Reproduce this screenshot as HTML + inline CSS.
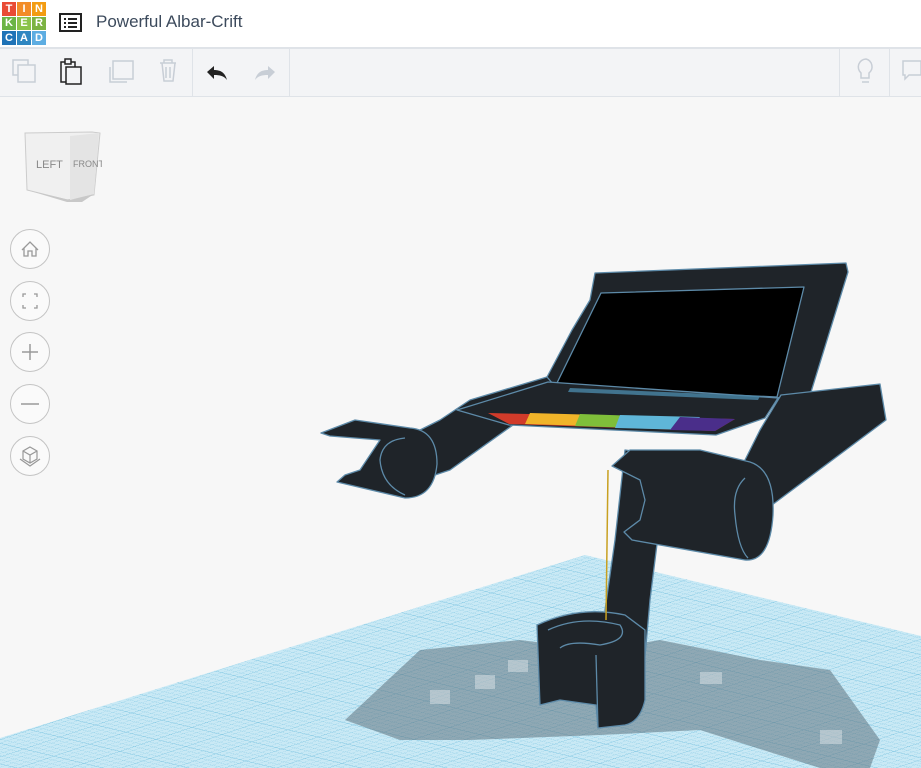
<!DOCTYPE html>
<html><head><meta charset="utf-8"><style>
body{margin:0;width:921px;height:768px;overflow:hidden;background:#f7f7f7;font-family:"Liberation Sans",sans-serif;position:relative}
.top{position:absolute;left:0;top:0;width:921px;height:47px;background:#fff;border-bottom:2px solid #dfe3e8}
.logo{position:absolute;left:2px;top:2px;width:43px;height:43px;display:grid;grid-template-columns:repeat(3,14px);gap:1px}
.logo span{color:#fff;font-weight:bold;font-size:11px;display:flex;align-items:center;justify-content:center}
.title{position:absolute;left:96px;top:12px;font-size:17px;color:#3c4a5c}
.tb{position:absolute;left:0;top:49px;width:921px;height:47px;background:#f3f4f6;border-bottom:1px solid #dfe3e8}
.sep{position:absolute;top:0;width:1px;height:47px;background:#dfe3e8}
.nav{position:absolute;left:10px;width:40px;height:40px;border:1px solid #c4c4c4;border-radius:50%;box-sizing:border-box;background:#fafafa}
</style></head><body>
<svg width="921" height="768" style="position:absolute;left:0;top:0">
<defs>
<pattern id="g" width="6" height="6" patternUnits="userSpaceOnUse" patternTransform="matrix(1 0.24 -1.2 0.4 0 0)"><rect width="6" height="6" fill="#c9e9f5"/><path d="M0 0H6M0 0V6" stroke="#8ccde6" stroke-width="0.8"/></pattern>
<pattern id="g2" width="30" height="30" patternUnits="userSpaceOnUse" patternTransform="matrix(1 0.24 -1.2 0.4 0 0)"><path d="M0 0H30M0 0V30" stroke="#5fb5d8" stroke-width="1.2" fill="none"/></pattern>
<clipPath id="cp"><polygon points="585,555 921,636 921,768 0,768 0,738"/></clipPath>
</defs>
<polygon points="585,555 921,636 921,768 0,768 0,738" fill="url(#g)"/>
<polygon points="585,555 921,636 921,768 0,768 0,738" fill="url(#g2)" opacity=".6"/>
<g clip-path="url(#cp)" fill="#5e727e" opacity="0.55">
<polygon points="345,720 420,650 520,640 600,650 660,640 760,660 830,670 880,740 870,768 820,768 700,730 600,735 470,740 400,740"/>
</g>
<g fill="#fff" opacity="0.35" clip-path="url(#cp)"><rect x="430" y="690" width="20" height="14"/><rect x="475" y="675" width="20" height="14"/><rect x="508" y="660" width="20" height="12"/><rect x="700" y="672" width="22" height="12"/><rect x="820" y="730" width="22" height="14"/></g>
<g fill="#1f2429" stroke="#5d8aa8" stroke-width="1.3" stroke-linejoin="round">
<!-- screen frame -->
<polygon points="595,273 846,263 848,272 811,392 777,398 555,387 547,377 572,330 590,300"/>
<polygon points="601,293 804,287 777,397 555,387" fill="#000"/>
<!-- right arm -->
<polygon points="781,395 880,384 886,420 772,505 730,490 760,430"/>
<!-- left arm -->
<polygon points="547,377 560,392 520,420 450,470 420,480 395,470 400,440 440,420 470,400"/>
<!-- stem -->
<polygon points="625,450 665,455 660,520 650,600 642,690 605,700 605,610 615,540"/>
<!-- plate -->
<polygon points="457,410 548,382 778,398 765,418 716,435 509,425"/>
<!-- left clip -->
<path d="M321,433 L355,420 L410,428 Q437,430 437,464 Q434,498 405,498 L337,482 L345,475 L360,470 L380,440 L330,436 Z"/>
<path d="M405,438 Q382,440 380,460 Q382,485 405,495" fill="none"/>
<!-- right clip -->
<path d="M612,466 L630,450 L700,450 L750,462 Q775,470 773,515 Q770,562 745,560 L632,540 L624,532 L640,520 L645,500 L640,480 L620,470 Z"/>
<path d="M745,478 Q732,490 735,515 Q738,548 748,558" fill="none"/>
<!-- cup -->
<path d="M537,625 Q580,605 625,615 L645,630 L645,700 Q640,722 625,725 L598,728 L596,705 L560,700 L540,705 Z"/>
<path d="M548,630 Q580,615 620,625 Q630,640 600,645 Q570,640 560,648" fill="#1f2429"/>
<path d="M596,655 L598,728" fill="none"/>
</g>
<polygon points="488,413 735,419 715,431 509,424" fill="#d13b2a"/>
<polygon points="530,413 600,415 590,426 525,424" fill="#f0b429"/>
<polygon points="580,414 640,416 635,428 575,426" fill="#7fbf3a"/>
<polygon points="620,415 700,417 690,430 615,428" fill="#5fb6d8"/>
<polygon points="680,417 735,419 715,431 670,430" fill="#4a2e8a"/>
<polygon points="570,388 760,396 758,400 568,392" fill="#4a87a8" opacity=".8"/>
<path d="M608 470 L606 620" stroke="#c8a020" stroke-width="1.5"/>
</svg>
<div class="top">
<div class="logo">
<span style="background:#e94b35">T</span><span style="background:#f28c28">I</span><span style="background:#f39c12">N</span>
<span style="background:#6bb445">K</span><span style="background:#8bc34a">E</span><span style="background:#7cb342">R</span>
<span style="background:#1f73b7">C</span><span style="background:#2e86c1">A</span><span style="background:#5dade2">D</span></div>
<svg style="position:absolute;left:59px;top:13px" width="23" height="19"><rect x="1" y="1" width="21" height="17" fill="none" stroke="#222" stroke-width="2"/><path d="M5 6h2M9 6h9M5 10h2M9 10h9M5 14h2M9 14h9" stroke="#222" stroke-width="2"/></svg>
<div class="title">Powerful Albar-Crift</div></div>
<div class="tb">
<svg width="921" height="47">
<g fill="none" stroke="#c8ced6" stroke-width="1.5"><rect x="13" y="11" width="15" height="15"/><rect x="18" y="16" width="17" height="17" fill="#f3f4f6"/>
<rect x="113" y="12" width="20" height="18"/><path d="M110 18v15h17"/><path d="M160 14h16M164 14v-3h8v3M162 14l2 18h9l2-18M166 18v11M170 18v11"/>
<path d="M866 10a8 8 0 0 0-5 14v5h8v-5a8 8 0 0 0-3-14zM862 33h7"/><path d="M903 12h18v14h-12l-4 4v-4h-2z"/></g>
<g fill="none" stroke="#222" stroke-width="1.5"><rect x="61" y="13" width="14" height="20"/><rect x="66" y="18" width="15" height="17" fill="#f3f4f6"/><rect x="65" y="10" width="6" height="5" fill="#f3f4f6"/></g>
<path d="M207 23l7-6v4c6 0 11 2 13 10-3-4-7-5-13-5v4z" fill="#222"/>
<path d="M275 23l-7-6v4c-6 0-11 2-13 10 3-4 7-5 13-5v4z" fill="#c8ced6"/>
</svg>
<div class="sep" style="left:192px"></div><div class="sep" style="left:289px"></div><div class="sep" style="left:839px"></div><div class="sep" style="left:889px"></div></div>
<svg style="position:absolute;left:22px;top:130px" width="80" height="75">
<polygon points="3,3 70,2 78,3 72,65 45,70 5,60" fill="#f0f0f0" stroke="#ccc"/>
<polygon points="48,6 77,3 72,64 48,70" fill="#e4e4e4"/><polygon points="5,60 48,70 72,64 60,72 45,72" fill="#c8c8c8"/>
<text x="14" y="38" font-size="11" fill="#888">LEFT</text><text x="51" y="37" font-size="9" fill="#888">FRONT</text></svg>
<div class="nav" style="top:229px"><svg width="38" height="38"><path d="M11 20l8-8 8 8M13 18v8h4v-5h4v5h4v-8" fill="none" stroke="#999" stroke-width="1.3"/></svg></div>
<div class="nav" style="top:281px"><svg width="38" height="38"><path d="M12 15v-3h3M23 12h3v3M26 23v3h-3M15 26h-3v-3" fill="none" stroke="#999" stroke-width="1.3"/></svg></div>
<div class="nav" style="top:332px"><svg width="38" height="38"><path d="M11 19h16M19 11v16" stroke="#999" stroke-width="1.5"/></svg></div>
<div class="nav" style="top:384px"><svg width="38" height="38"><path d="M10 19h18" stroke="#999" stroke-width="1.5"/></svg></div>
<div class="nav" style="top:436px"><svg width="38" height="38"><path d="M19 10l7 4v8l-7 4-7-4v-8zM12 14l7 4 7-4M19 18v8M9 22l10 7 10-7" fill="none" stroke="#999" stroke-width="1.2"/></svg></div>
</body></html>
